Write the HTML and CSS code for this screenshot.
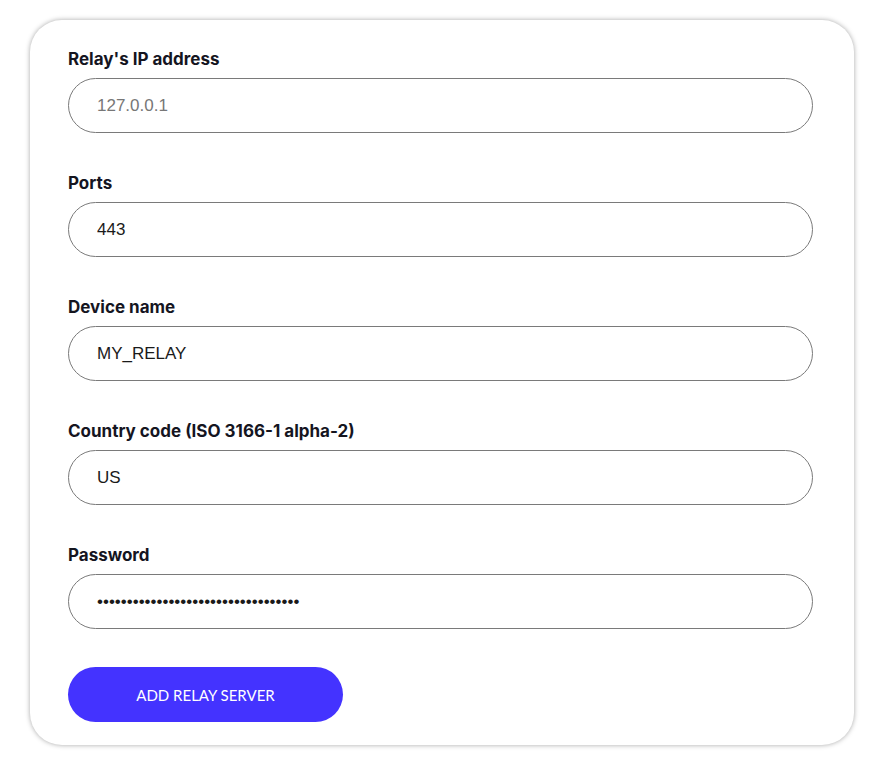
FILE: index.html
```html
<!DOCTYPE html>
<html lang="en">
<head>
  <meta charset="UTF-8">
  <meta name="viewport" content="width=device-width, initial-scale=1.0">
  <title>Add relay server</title>
  <link rel="stylesheet" href="styles.css">
</head>
<body>
  <form class="relay-form" onsubmit="return false">
    <div class="field">
      <label for="ip">Relay's IP address</label>
      <input type="text" id="ip" placeholder="127.0.0.1">
    </div>
    <div class="field">
      <label for="ports">Ports</label>
      <input type="text" id="ports" value="443">
    </div>
    <div class="field">
      <label for="device">Device name</label>
      <input type="text" id="device" value="MY_RELAY">
    </div>
    <div class="field">
      <label for="country">Country code (ISO 3166-1 alpha-2)</label>
      <input type="text" id="country" value="US">
    </div>
    <div class="field">
      <label for="password">Password</label>
      <input type="password" id="password" value="supersecretrelaypassword1234567890">
    </div>
    <button type="submit" class="submit">ADD RELAY SERVER</button>
  </form>
</body>
</html>
```

FILE: styles.css
```css
body {
  margin: 0;
  padding: 20px 27px 20px 30px;
  background: #fff;
  font-family: Inter, "Liberation Sans", sans-serif;
}
.relay-form {
  background: #fff;
  border-radius: 32px;
  box-shadow: 0 0 5px rgba(0, 0, 0, 0.35);
  padding: 28px 41px 23px 38px;
  display: flex;
  flex-direction: column;
  align-items: flex-start;
}
.field {
  width: 100%;
  margin-bottom: 39px;
}
.field:nth-last-of-type(1) {
  margin-bottom: 38px;
}
label {
  display: block;
  font-weight: 700;
  font-size: 17px;
  line-height: 22px;
  color: #15151f;
  margin-bottom: 8px;
}
input {
  box-sizing: border-box;
  width: 100%;
  height: 55px;
  padding: 0 28px;
  border: 1px solid #7a7a7a;
  border-radius: 28px;
  font-family: Arial, "Liberation Sans", sans-serif;
  font-size: 17px;
  color: #1a1a1a;
  outline: none;
}
input::placeholder {
  color: #777;
}
.submit {
  width: 275px;
  height: 55px;
  border: none;
  border-radius: 28px;
  background-color: #4433ff;
  color: #fff;
  font-family: Lato, sans-serif;
  font-size: 15px;
  cursor: pointer;
}
```
